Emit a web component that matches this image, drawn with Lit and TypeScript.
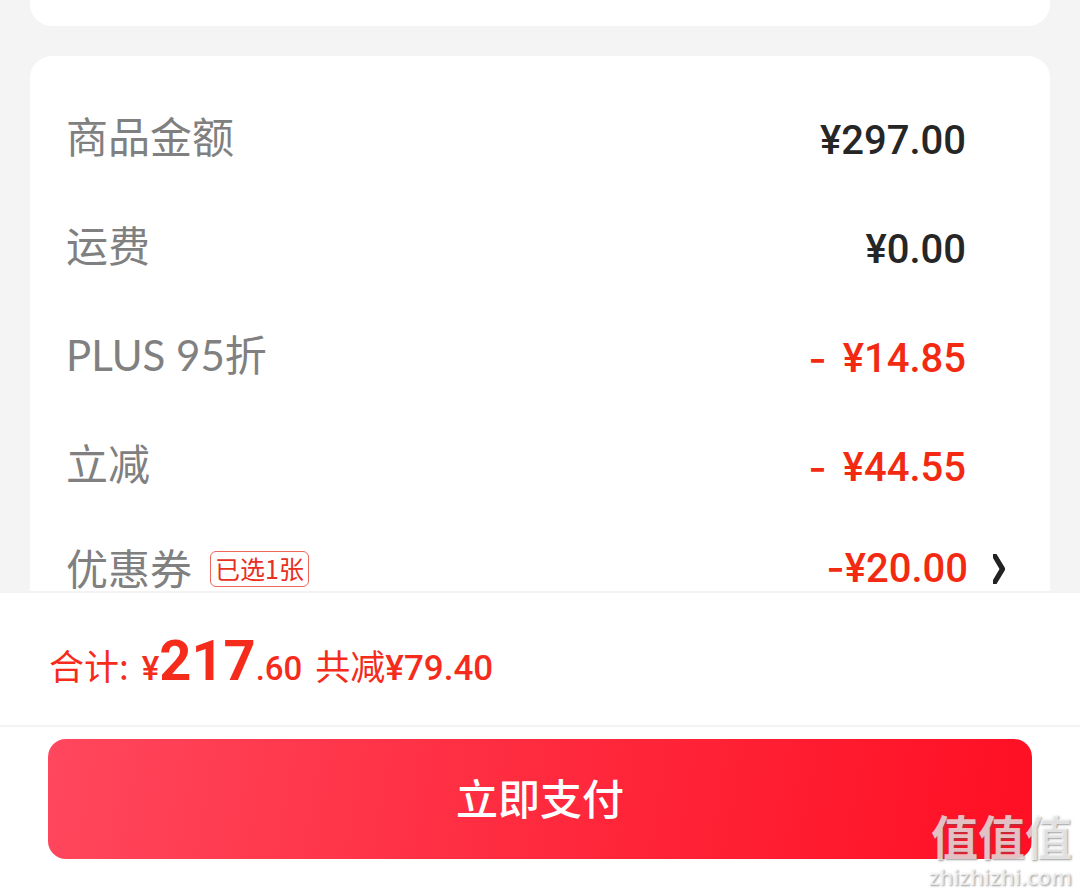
import { LitElement, html, css, nothing } from "lit";
import { customElement } from "lit/decorators.js";
import { classMap } from "lit/directives/class-map.js";

interface Line {
  label: string;
  amount: string;
  discount: boolean;
}

const LINES: Line[] = [
  { label: "商品金额", amount: "¥297.00", discount: false },
  { label: "运费", amount: "¥0.00", discount: false },
  { label: "PLUS 95折", amount: "¥14.85", discount: true },
  { label: "立减", amount: "¥44.55", discount: true },
];

@customElement("app-root")
export class AppRoot extends LitElement {
  static styles = css`
    :host {
      display: flex;
      flex-direction: column;
      position: relative;
      height: 100vh;
      overflow: hidden;
      background: #f4f4f4;
      font-family: "Noto Sans CJK SC", sans-serif;
      color: #262626;
    }
    .scroll {
      flex: 1;
      min-height: 0;
      overflow: hidden;
      display: flex;
      flex-direction: column;
      gap: 30px;
      padding: 0 30px;
    }
    .card {
      flex: none;
      background: #fff;
      border-radius: 22px;
    }
    .previous {
      height: 26px;
      border-radius: 0 0 22px 22px;
    }
    .lines {
      margin: 0;
      padding: 26px 0;
    }
    .line {
      display: flex;
      align-items: center;
      justify-content: space-between;
      height: 109px;
      padding: 0 84px 0 36px;
    }
    .line.coupon {
      height: 101px;
      padding-right: 44px;
    }
    .label {
      display: flex;
      align-items: center;
      gap: 18px;
      font-family: Lato, "Noto Sans CJK SC", sans-serif;
      font-size: 42px;
      line-height: 48px;
      color: #808080;
    }
    .amount {
      display: flex;
      gap: 16px;
      margin: 0;
      padding-top: 8px;
      font-family: Roboto, "Noto Sans CJK SC", sans-serif;
      font-size: 40px;
      line-height: 54px;
      font-weight: 500;
    }
    .coupon .amount {
      padding-top: 0;
    }
    .discount {
      color: #f22a12;
    }
    .minus {
      font-family: Inter, sans-serif;
    }
    .tag {
      box-sizing: border-box;
      height: 36px;
      padding: 0 4px;
      border: 1px solid #f0655c;
      border-radius: 6px;
      font-family: "Noto Sans CJK SC", sans-serif;
      font-size: 25px;
      line-height: 32px;
      color: #e8301f;
    }
    .more {
      display: flex;
      align-items: center;
      gap: 22px;
      padding: 0;
      border: 0;
      background: none;
      font: inherit;
    }
    .chevron {
      display: block;
      width: 16px;
      height: 32px;
    }
    .footer {
      flex: none;
      background: #fff;
      border-top: 2px solid #f3f3f3;
    }
    .total {
      display: flex;
      align-items: baseline;
      gap: 13px;
      height: 134px;
      box-sizing: border-box;
      padding: 26px 49px 0;
      border-bottom: 2px solid #f3f3f3;
      font-size: 35px;
      line-height: 84px;
      color: #f52c1c;
      white-space: nowrap;
    }
    .sum {
      font-family: Roboto, sans-serif;
      font-weight: 500;
    }
    .payable {
      font-size: 33px;
    }
    .big {
      font-size: 56px;
      font-weight: 700;
    }
    .action {
      padding: 12px 48px 36px;
    }
    .pay {
      display: block;
      width: 100%;
      height: 120px;
      padding: 0 0 6px;
      border: 0;
      border-radius: 18px;
      background: linear-gradient(100deg, #ff475d, #ff2a3e 50%, #ff0f23);
      color: #fff;
      font-family: "Noto Sans CJK SC", sans-serif;
      font-size: 42px;
      font-weight: 500;
    }
    .mark {
      position: absolute;
      right: 8px;
      bottom: 4px;
      text-align: right;
      pointer-events: none;
      color: rgba(255, 255, 255, 0.7);
      text-shadow: 1px 1px 2px rgba(90, 90, 90, 0.6);
    }
    .mark-name {
      font-size: 47px;
      line-height: 52px;
      font-weight: 700;
    }
    .mark-site {
      font-family: "Open Sans", sans-serif;
      font-size: 22px;
      line-height: 30px;
      font-weight: 600;
    }
  `;

  private renderLine(line: Line) {
    return html`
      <div class="line">
        <dt class="label">${line.label}</dt>
        <dd class=${classMap({ amount: true, discount: line.discount })}>
          ${line.discount ? html`<span class="minus">-</span>` : nothing}
          <span>${line.amount}</span>
        </dd>
      </div>
    `;
  }

  render() {
    return html`
      <main class="scroll">
        <section class="card previous"></section>
        <section class="card">
          <dl class="lines">
            ${LINES.map((line) => this.renderLine(line))}
            <div class="line coupon">
              <dt class="label"><span>优惠券</span><span class="tag">已选1张</span></dt>
              <dd class="amount">
                <button class="more" type="button">
                  <span class="discount"><span class="minus">-</span>¥20.00</span>
                  <svg class="chevron" viewBox="0 0 16 32" aria-hidden="true">
                    <path d="M3 1 H6.500 L15 15 V17 L6.500 31 H3 V27 L9.500 16 L3 5 Z" fill="#222" />
                  </svg>
                </button>
              </dd>
            </div>
          </dl>
        </section>
      </main>
      <footer class="footer">
        <div class="total">
          <span>合计:</span>
          <span class="sum payable">¥<span class="big">217</span>.60</span>
          <span>共减<span class="sum">¥79.40</span></span>
        </div>
        <div class="action"><button class="pay" type="button">立即支付</button></div>
      </footer>
      <div class="mark">
        <div class="mark-name">值值值</div>
        <div class="mark-site">zhizhizhi.com</div>
      </div>
    `;
  }
}
